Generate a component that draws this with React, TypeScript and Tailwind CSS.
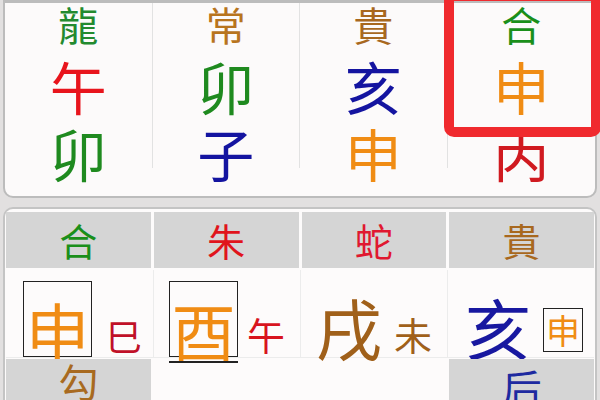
const font = { fontFamily: '"Noto Sans CJK TC", "Noto Sans CJK SC", sans-serif' }

type TopCol = { head: string; headColor: string; mid: string; midColor: string; low: string; lowColor: string; last?: boolean }

const topCols: TopCol[] = [
  { head: '龍', headColor: 'text-[#238a2f]', mid: '午', midColor: 'text-[#e8141c]', low: '卯', lowColor: 'text-[#1f8a1f]' },
  { head: '常', headColor: 'text-[#b8741e]', mid: '卯', midColor: 'text-[#1f8a1f]', low: '子', lowColor: 'text-[#1414a0]' },
  { head: '貴', headColor: 'text-[#a8681e]', mid: '亥', midColor: 'text-[#1414a0]', low: '申', lowColor: 'text-[#f08c14]' },
  { head: '合', headColor: 'text-[#1a8f1a]', mid: '申', midColor: 'text-[#f08c14]', low: '丙', lowColor: 'text-[#d01a20]', last: true },
]

function TopPanel() {
  return (
    <div className="mx-[3px] h-[198px] rounded-b-[10px] border-2 border-t-[3px] border-[#bcbcbc] bg-[#fcfafa] grid grid-cols-4">
      {topCols.map((c, i) => (
        <div key={i} className="relative">
          <div className={`h-[165px] flex flex-col items-center ${c.last ? '' : 'border-r border-[#e2e2e2]'}`}>
            <div className={`text-[40px] leading-[42px] ${c.headColor}`}>{c.head}</div>
            <div className={`text-[57px] leading-[80px] ${c.midColor}`}>{c.mid}</div>
            <div className={`text-[57px] leading-[54px] ${c.lowColor}`}>{c.low}</div>
          </div>
          {c.last && (
            <div className="absolute left-[-4px] right-[-6px] top-[-12px] h-[146px] rounded-[10px] border-[10px] border-[#f02a2e]" />
          )}
        </div>
      ))}
    </div>
  )
}

function Boxed({ ch, color, size }: { ch: string; color: string; size: 'lg' | 'sm' }) {
  if (size === 'sm') {
    return (
      <div className="w-[40px] h-[44px] border-[1.5px] border-[#222] flex items-center justify-center mb-[5px]">
        <span className={`text-[34px] leading-none ${color}`}>{ch}</span>
      </div>
    )
  }
  return (
    <div className="w-[69px] h-[76px] border-[1.5px] border-[#222] flex items-end justify-center overflow-visible">
      <span className={`text-[64px] leading-[66px] -mb-[6px] ${color}`}>{ch}</span>
    </div>
  )
}

function BottomPanel() {
  return (
    <div className="mx-[3px] mt-[9px] rounded-t-[10px] border-2 border-b-0 border-[#c4c4c4] bg-[#fdfbfb] p-[1px] pt-[3px]">
      <div className="grid grid-cols-4 gap-[3px]">
        {[
          ['合', 'text-[#1a8f1a]'],
          ['朱', 'text-[#e0141c]'],
          ['蛇', 'text-[#e01830]'],
          ['貴', 'text-[#a8681e]'],
        ].map(([ch, color]) => (
          <div key={ch + color} className="h-[56px] bg-[#d5d5d5] flex items-center justify-center">
            <span className={`text-[38px] leading-none ${color}`}>{ch}</span>
          </div>
        ))}
      </div>
      <div className="mt-[2px] grid grid-cols-4 h-[88px] border-b border-[#ececec]">
        <div className="flex items-end justify-center gap-[14px] pl-[6px]">
          <Boxed ch="申" color="text-[#f08c14]" size="lg" />
          <span className="text-[36px] leading-none mb-[4px] text-[#c01028]">巳</span>
        </div>
        <div className="flex items-end justify-center gap-[9px] border-l border-[#ececec]">
          <div className="relative">
            <Boxed ch="酉" color="text-[#f08c14]" size="lg" />
            <div className="absolute left-0 right-0 -bottom-[6px] h-[2px] bg-[#222]" />
          </div>
          <span className="text-[38px] leading-none mb-[4px] text-[#d8141e]">午</span>
        </div>
        <div className="flex items-end justify-center gap-[12px] border-l border-[#ececec]">
          <span className="text-[66px] leading-[66px] -mb-[2px] text-[#a0601a]">戌</span>
          <span className="text-[38px] leading-none mb-[4px] text-[#a0601a]">未</span>
        </div>
        <div className="flex items-end justify-center gap-[12px] border-l border-[#ececec] pl-[6px]">
          <span className="text-[66px] leading-[66px] -mb-[2px] text-[#1818a0]">亥</span>
          <Boxed ch="申" color="text-[#f08c14]" size="sm" />
        </div>
      </div>
      <div className="mt-[1px] grid grid-cols-4 gap-[3px] h-[60px]">
        <div className="bg-[#d5d5d5] flex justify-center pt-[2px]">
          <span className="text-[40px] leading-none text-[#a86a20]">勾</span>
        </div>
        <div />
        <div />
        <div className="bg-[#d5d5d5] flex justify-center pt-[8px]">
          <span className="text-[40px] leading-none text-[#1e2aa0]">后</span>
        </div>
      </div>
    </div>
  )
}

export default function App() {
  return (
    <div className="w-[600px] h-[400px] overflow-hidden bg-[#e2e0e0]" style={font}>
      <TopPanel />
      <BottomPanel />
    </div>
  )
}
